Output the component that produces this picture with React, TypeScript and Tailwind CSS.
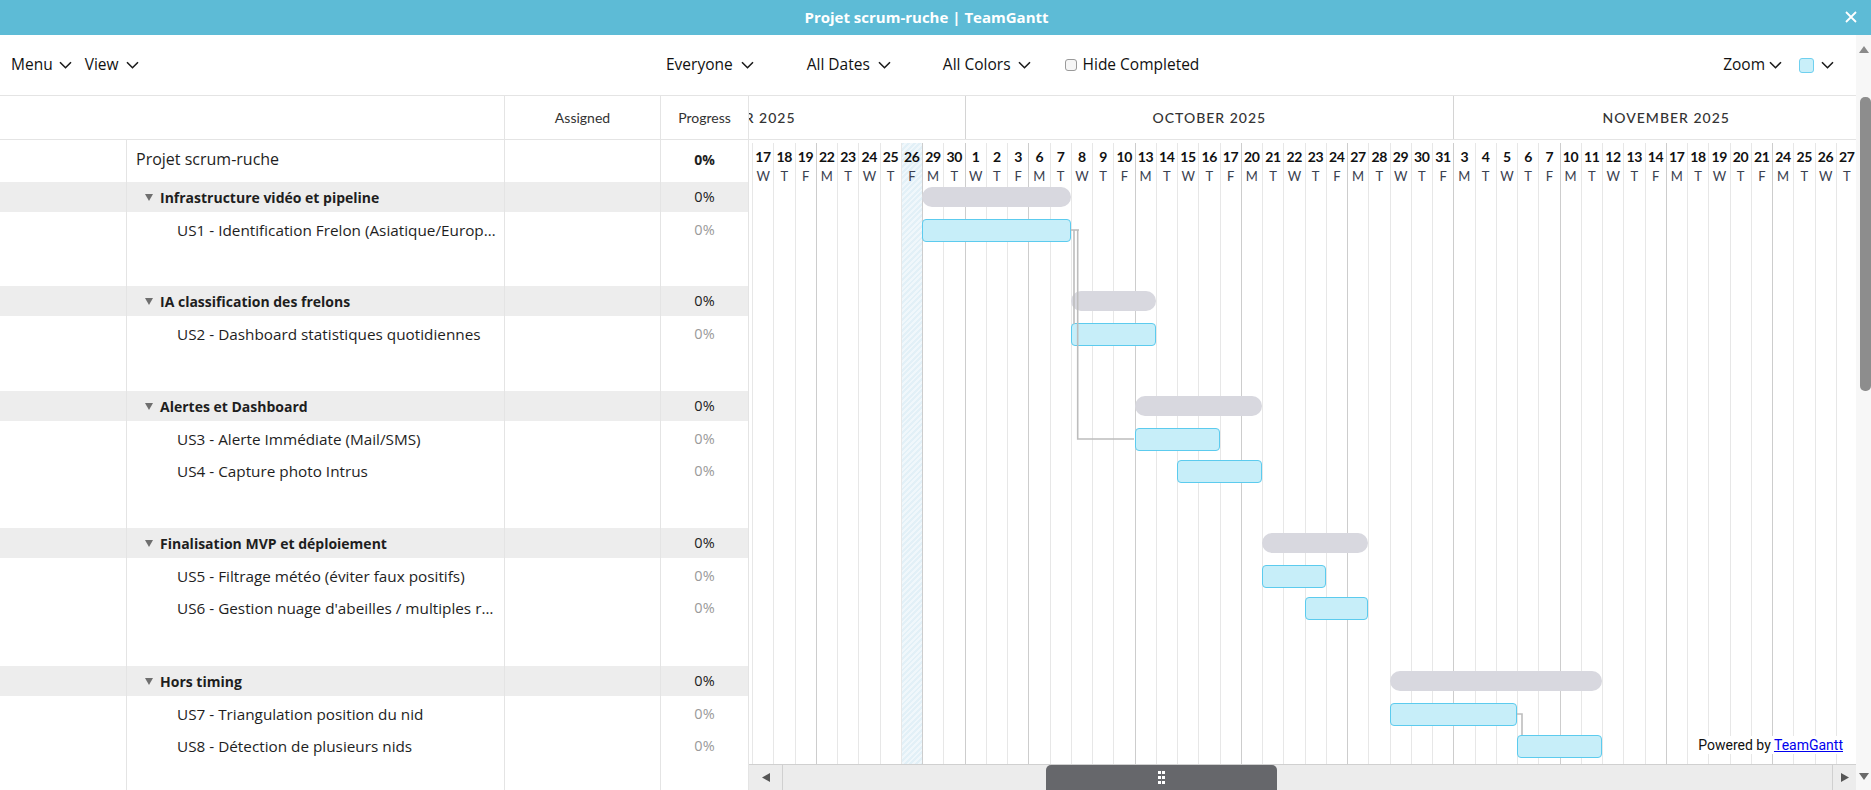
import React from 'react';

const COL = 21.25;
const LEAD = 3;

type Day = [number, string];

const DAYS: Day[] = [
  [17, 'W'], [18, 'T'], [19, 'F'], [22, 'M'], [23, 'T'], [24, 'W'], [25, 'T'], [26, 'F'], [29, 'M'], [30, 'T'],
  [1, 'W'], [2, 'T'], [3, 'F'], [6, 'M'], [7, 'T'], [8, 'W'], [9, 'T'], [10, 'F'], [13, 'M'], [14, 'T'],
  [15, 'W'], [16, 'T'], [17, 'F'], [20, 'M'], [21, 'T'], [22, 'W'], [23, 'T'], [24, 'F'], [27, 'M'], [28, 'T'],
  [29, 'W'], [30, 'T'], [31, 'F'],
  [3, 'M'], [4, 'T'], [5, 'W'], [6, 'T'], [7, 'F'], [10, 'M'], [11, 'T'], [12, 'W'], [13, 'T'], [14, 'F'],
  [17, 'M'], [18, 'T'], [19, 'W'], [20, 'T'], [21, 'F'], [24, 'M'], [25, 'T'], [26, 'W'], [27, 'T'],
];
const TODAY = 7;

type Row = {
  kind: 'project' | 'group' | 'task' | 'spacer';
  name?: string;
  h: number;
  bar?: [number, number];
};

const ROWS: Row[] = [
  { kind: 'project', name: 'Projet scrum-ruche', h: 42 },
  { kind: 'group', name: 'Infrastructure vidéo et pipeline', h: 32, bar: [8, 7] },
  { kind: 'task', name: 'US1 - Identification Frelon (Asiatique/Européen)', h: 32, bar: [8, 7] },
  { kind: 'spacer', h: 40 },
  { kind: 'group', name: 'IA classification des frelons', h: 32, bar: [15, 4] },
  { kind: 'task', name: 'US2 - Dashboard statistiques quotidiennes', h: 32, bar: [15, 4] },
  { kind: 'spacer', h: 41 },
  { kind: 'group', name: 'Alertes et Dashboard', h: 32, bar: [18, 6] },
  { kind: 'task', name: 'US3 - Alerte Immédiate (Mail/SMS)', h: 32, bar: [18, 4] },
  { kind: 'task', name: 'US4 - Capture photo Intrus', h: 32, bar: [20, 4] },
  { kind: 'spacer', h: 41 },
  { kind: 'group', name: 'Finalisation MVP et déploiement', h: 32, bar: [24, 5] },
  { kind: 'task', name: 'US5 - Filtrage météo (éviter faux positifs)', h: 32, bar: [24, 3] },
  { kind: 'task', name: "US6 - Gestion nuage d'abeilles / multiples ruches", h: 32, bar: [26, 3] },
  { kind: 'spacer', h: 42 },
  { kind: 'group', name: 'Hors timing', h: 32, bar: [30, 10] },
  { kind: 'task', name: 'US7 - Triangulation position du nid', h: 32, bar: [30, 6] },
  { kind: 'task', name: 'US8 - Détection de plusieurs nids', h: 32, bar: [36, 4] },
];

const Chevron = () => (
  <svg width="13" height="8" viewBox="0 0 13 8" fill="none" stroke="#1a1a1a" strokeWidth="1.6">
    <path d="M1 1.2l5.5 5.5 5.5-5.5" />
  </svg>
);

const OPEN = "font-['Open_Sans','Liberation_Sans',sans-serif]";
const GRID = 'grid grid-cols-[127px_378px_156px_87px]';
const LINE = 'border-r border-[#e4e4e4]';

function LeftRow({ row }: { row: Row }) {
  if (row.kind === 'spacer') {
    return (
      <div className={GRID} style={{ height: row.h }}>
        <div className={LINE} />
        <div className={LINE} />
        <div className={LINE} />
        <div />
      </div>
    );
  }
  if (row.kind === 'project') {
    return (
      <div className={GRID} style={{ height: row.h }}>
        <div className={LINE} />
        <div className={`${LINE} ${OPEN} flex items-center pl-[9px] pb-[4px] text-[16px] font-medium text-[#1e1e1e]`}>
          {row.name}
        </div>
        <div className={LINE} />
        <div className={`${OPEN} flex items-center justify-center pb-[4px] text-[14px] font-bold text-[#1e1e1e]`}>0%</div>
      </div>
    );
  }
  if (row.kind === 'group') {
    return (
      <div className={GRID} style={{ height: row.h }}>
        <div className={LINE}>
          <div className="h-[30px] bg-[#ededed]" />
        </div>
        <div className={LINE}>
          <div className={`h-[30px] bg-[#ededed] flex items-center pl-[18px] gap-[7px] ${OPEN} text-[14px] font-bold text-[#1e1e1e]`}>
            <svg width="8" height="7" viewBox="0 0 8 7">
              <path d="M0 0h8L4 7z" fill="#6f6f6f" />
            </svg>
            {row.name}
          </div>
        </div>
        <div className={LINE}>
          <div className="h-[30px] bg-[#ededed]" />
        </div>
        <div className={`h-[30px] bg-[#ededed] flex items-center justify-center ${OPEN} text-[14.5px] text-[#222]`}>
          0%
        </div>
      </div>
    );
  }
  return (
    <div className={GRID} style={{ height: row.h }}>
      <div className={LINE} />
      <div className={`${LINE} flex items-center pl-[50px] pr-[2px] min-w-0`}>
        <span className={`truncate ${OPEN} text-[15.3px] text-[#1e1e1e]`}>{row.name}</span>
      </div>
      <div className={LINE} />
      <div className={`flex items-center justify-center ${OPEN} text-[14.5px] text-[#9a9a9a]`}>0%</div>
    </div>
  );
}

function ChartRow({ row }: { row: Row }) {
  if (!row.bar) return <div style={{ height: row.h }} />;
  const [start, span] = row.bar;
  const style = { marginLeft: LEAD + start * COL, width: span * COL };
  return (
    <div className="pt-[5px]" style={{ height: row.h }}>
      {row.kind === 'group' ? (
        <div className="h-[20px] rounded-full bg-[#d8d8df]" style={style} />
      ) : (
        <div className="h-[23px] rounded-[4px] border border-[#5ccbee] bg-[#c7eef9]" style={style} />
      )}
    </div>
  );
}

function DayColumn({ day, i }: { day: Day; i: number }) {
  const strong = day[1] === 'M' || day[0] === 1;
  const today = i === TODAY;
  return (
    <div
      className={`w-[21.25px] shrink-0 flex flex-col items-center border-l ${
        strong ? 'border-[#cdcdcd]' : 'border-[#e7e7e7]'
      } ${today ? 'bg-[repeating-linear-gradient(135deg,#e2f0f7_0_2px,#f0f7fb_2px_4px)]' : ''}`}
    >
      <span className="mt-[5px] text-[14px] leading-[17px] font-bold text-[#111] tracking-[-0.3px]">{day[0]}</span>
      <span className="mt-[3px] text-[13px] leading-[16px] text-[#3a4150]">{day[1]}</span>
    </div>
  );
}

export default function App() {
  return (
    <div className="w-[1871px] h-[790px] flex flex-col overflow-hidden bg-white font-['Lato','Liberation_Sans',sans-serif] text-[#1e1e1e]">
      {/* title bar */}
      <div className="h-[35px] shrink-0 bg-[#5dbbd6] flex items-center justify-center pr-[18px] relative">
        <span className={`text-white font-bold text-[15px] ${OPEN}`}>Projet scrum-ruche | TeamGantt</span>
        <svg
          className="absolute right-[14px] top-[11px]"
          width="12"
          height="12"
          viewBox="0 0 12 12"
          stroke="white"
          strokeWidth="1.8"
        >
          <path d="M1 1l10 10M11 1L1 11" />
        </svg>
      </div>

      <div className="flex flex-1 min-h-0">
        <div className="flex-1 min-w-0 flex flex-col">
          {/* toolbar */}
          <div className={`h-[61px] shrink-0 border-b border-[#e4e4e4] flex items-center ${OPEN} text-[15.5px] text-[#111]`}>
            <div className="w-[666px] shrink-0 flex items-center pl-[11px]">
              <span>Menu</span>
              <span className="ml-[6px] mr-[13px]"><Chevron /></span>
              <span>View</span>
              <span className="ml-[7px]"><Chevron /></span>
            </div>
            <div className="flex items-center">
              <span>Everyone</span>
              <span className="ml-[8px]"><Chevron /></span>
              <span className="ml-[53px]">All Dates</span>
              <span className="ml-[8px]"><Chevron /></span>
              <span className="ml-[52px]">All Colors</span>
              <span className="ml-[7px]"><Chevron /></span>
              <span className="ml-[34px] w-[12px] h-[12px] rounded-[3px] border border-[#9a9a9a] bg-[#f6f6f6]" />
              <span className="ml-[6px]">Hide Completed</span>
            </div>
            <div className="flex-1" />
            <div className="flex items-center pr-[22px]">
              <span>Zoom</span>
              <span className="ml-[4px]"><Chevron /></span>
              <span className="ml-[17px] w-[15px] h-[15px] rounded-[3px] border border-[#6fd0ef] bg-[#c9eff9]" />
              <span className="ml-[7px]"><Chevron /></span>
            </div>
          </div>

          {/* header */}
          <div className="h-[44px] shrink-0 flex border-b border-[#e4e4e4]">
            <div className={`${GRID} border-r border-[#e4e4e4] shrink-0 text-[14px] text-[#333]`}>
              <div />
              <div className={LINE} />
              <div className={`${LINE} flex items-center justify-center`}>Assigned</div>
              <div className="flex items-center justify-center">Progress</div>
            </div>
            <div className="flex-1 min-w-0 overflow-hidden flex text-[14px] font-medium tracking-[1px] text-[#333]">
              <div className="w-[215.5px] shrink-0 overflow-hidden flex items-center">
                <div className="ml-[-252px] w-[467.5px] shrink-0 text-center">SEPTEMBER 2025</div>
              </div>
              <div className="w-[488.75px] shrink-0 border-l border-[#d4d4d4] flex items-center justify-center">
                OCTOBER 2025
              </div>
              <div className="w-[425px] shrink-0 border-l border-[#d4d4d4] flex items-center justify-center">
                NOVEMBER 2025
              </div>
            </div>
          </div>

          {/* body */}
          <div className="flex-1 min-h-0 flex">
            <div className="w-[749px] shrink-0 border-r border-[#e4e4e4] flex flex-col">
              {ROWS.map((r, i) => (
                <LeftRow key={i} row={r} />
              ))}
              <div className={`${GRID} flex-1`}>
                <div className={LINE} />
                <div className={LINE} />
                <div className={LINE} />
                <div />
              </div>
            </div>

            <div className="flex-1 min-w-0 flex flex-col">
              <div className="flex-1 min-h-0 relative overflow-hidden">
                <div className="flex h-full pt-[3px]">
                  <div className="w-[3px] shrink-0" />
                  {DAYS.map((d, i) => (
                    <DayColumn key={i} day={d} i={i} />
                  ))}
                </div>

                <div className="absolute inset-0 flex flex-col">
                  {ROWS.map((r, i) => (
                    <ChartRow key={i} row={r} />
                  ))}
                </div>

                <svg className="absolute inset-0" width="1107" height="624" fill="none" stroke="#bdbdbd" strokeWidth="1.6">
                  <path d="M321.75 90H330" />
                  <path d="M325 90V184" />
                  <path d="M328.7 90V299H385" />
                  <path d="M768 574H773V595" />
                </svg>

                <div className="absolute right-[11px] bottom-[10px] bg-white px-[2px] text-[14px] leading-[18px] text-[#111] font-['Roboto',sans-serif]">
                  Powered by <span className="text-[#0000ee] underline">TeamGantt</span>
                </div>
              </div>

              {/* horizontal scrollbar */}
              <div className="h-[26px] shrink-0 flex bg-[#ececec] border-t border-[#d0d0d0]">
                <div className="w-[34px] shrink-0 border-r border-[#d0d0d0] flex items-center justify-center">
                  <svg width="8" height="9" viewBox="0 0 8 9">
                    <path d="M8 0v9L0 4.5z" fill="#555" />
                  </svg>
                </div>
                <div className="flex-1 min-w-0 flex">
                  <div className="ml-[263px] w-[231px] h-full rounded-t-[5px] bg-[#66676b] flex items-center justify-center">
                    <div className="grid grid-cols-2 gap-x-[1px] gap-y-[2px]">
                      {[0, 1, 2, 3, 4, 5].map((k) => (
                        <span key={k} className="w-[3px] h-[3px] bg-white" />
                      ))}
                    </div>
                  </div>
                </div>
                <div className="w-[24px] shrink-0 border-l border-[#d0d0d0] flex items-center justify-center">
                  <svg width="8" height="9" viewBox="0 0 8 9">
                    <path d="M0 0v9L8 4.5z" fill="#555" />
                  </svg>
                </div>
              </div>
            </div>
          </div>
        </div>

        {/* vertical scrollbar */}
        <div className="w-[15px] shrink-0 bg-[#f7f7f7] flex flex-col items-center">
          <svg className="mt-[11px]" width="10" height="7" viewBox="0 0 10 7">
            <path d="M0 7h10L5 0z" fill="#8a8a8a" />
          </svg>
          <div className="mt-[44px] ml-[4px] w-[11px] h-[294px] rounded-[5px] bg-[#8d8d8d]" />
          <div className="flex-1" />
          <svg className="mb-[10px]" width="10" height="7" viewBox="0 0 10 7">
            <path d="M0 0h10L5 7z" fill="#6a6a6a" />
          </svg>
        </div>
      </div>
    </div>
  );
}
